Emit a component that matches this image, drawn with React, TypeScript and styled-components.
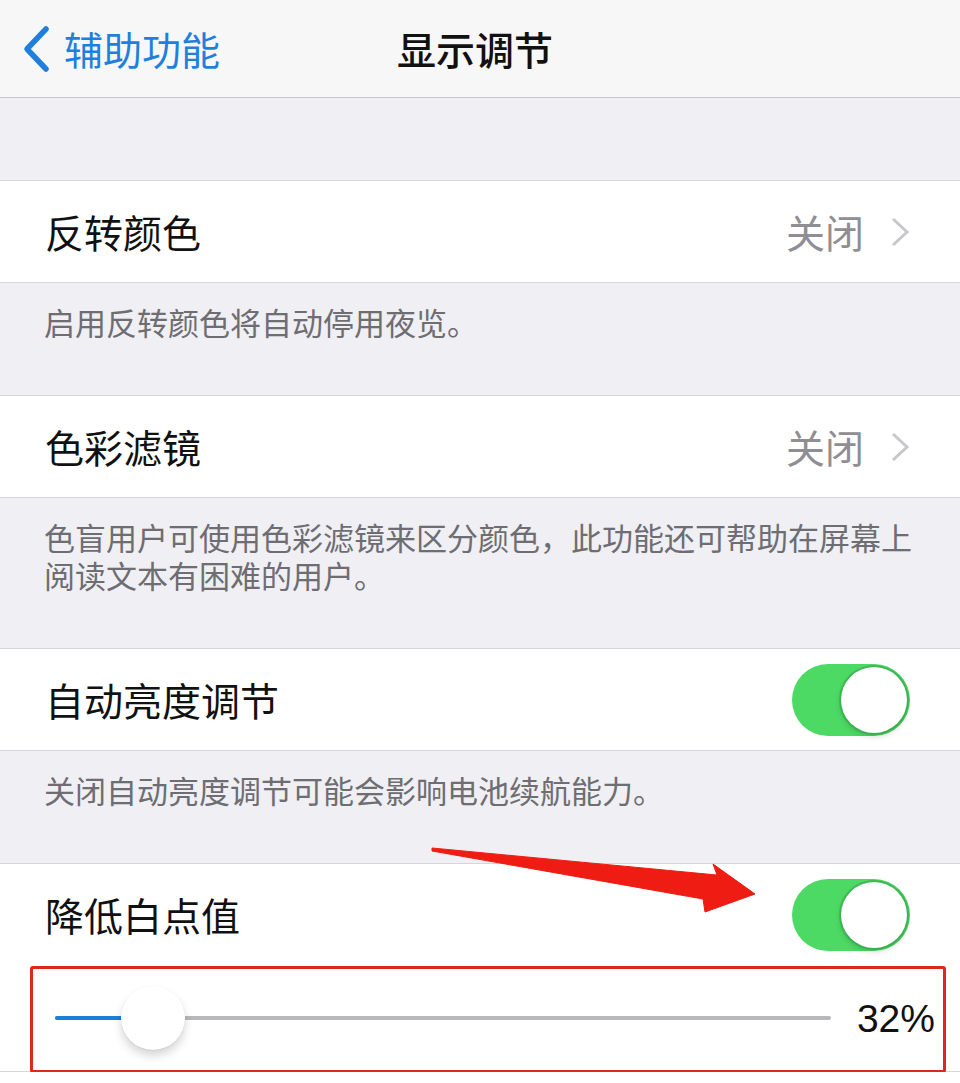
import React from 'react';
import styled, { createGlobalStyle } from 'styled-components';

const GlobalStyle = createGlobalStyle`
  html, body {
    margin: 0;
    padding: 0;
    background: #ffffff;
  }
  body {
    font-family: 'Noto Sans CJK SC', 'Liberation Sans', sans-serif;
    -webkit-font-smoothing: antialiased;
  }
`;

const SLIDER_MIN = 25;
const SLIDER_MAX = 100;
const THUMB = 64;

const Page = styled.div`
  width: 960px;
  display: flex;
  flex-direction: column;
`;

const NavBar = styled.header`
  height: 97px;
  background: #f7f7f8;
  border-bottom: 1px solid #c9c9cd;
  display: grid;
  grid-template-columns: 1fr auto 1fr;
  align-items: center;
`;

const BackButton = styled.div`
  display: flex;
  align-items: center;
  gap: 14px;
  padding-left: 22px;
  color: #1f7fdc;
  font-size: 39px;
  line-height: 1;
`;

const Title = styled.div`
  font-size: 39px;
  font-weight: 500;
  color: #111;
  line-height: 1;
  margin-right: 10px;
`;

const Spacer = styled.div`
  height: 82px;
  background: #efeff4;
`;

const Group = styled.section`
  background: #ffffff;
  border-top: 1px solid #d6d6da;
  border-bottom: 1px solid #d6d6da;
`;

const Row = styled.div<{ $tall?: boolean }>`
  position: relative;
  height: ${(p) => (p.$tall ? 106 : 101)}px;
  display: flex;
  align-items: center;
  padding: 0 50px 0 45px;
`;

const Label = styled.div`
  flex: 1;
  font-size: 39px;
  color: #111;
  line-height: 1;
`;

const Detail = styled.div`
  display: flex;
  align-items: center;
  gap: 26px;
  font-size: 39px;
  color: #8e8e93;
  line-height: 1;
`;

const Footer = styled.div`
  background: #efeff4;
  padding: 20px 40px 54px 44px;
  font-size: 31px;
  line-height: 38px;
  color: #6d6d72;
`;

const Switch = styled.div<{ $on: boolean }>`
  width: 118px;
  height: 72px;
  border-radius: 36px;
  background: ${(p) => (p.$on ? '#4cd964' : '#e5e5ea')};
  display: flex;
  align-items: center;
  justify-content: ${(p) => (p.$on ? 'flex-end' : 'flex-start')};
  padding: 0 3px;
  box-sizing: border-box;
`;

const Knob = styled.div`
  width: 66px;
  height: 66px;
  border-radius: 50%;
  background: #ffffff;
  box-shadow: 0 0 0 2px rgba(52, 160, 72, 0.55), 0 3px 6px rgba(0, 0, 0, 0.18);
`;

const SliderRow = styled.div`
  position: relative;
  height: 106px;
  display: flex;
  align-items: center;
  gap: 26px;
  padding: 0 25px 0 55px;
`;

const Track = styled.div`
  position: relative;
  flex: 1;
  height: 4px;
  border-radius: 2px;
  background: #b8b8bc;
`;

const Fill = styled.div`
  position: absolute;
  left: 0;
  top: 0;
  bottom: 0;
  border-radius: 2px;
  background: #1c7fd8;
`;

const Thumb = styled.div`
  position: absolute;
  top: 50%;
  width: ${THUMB}px;
  height: ${THUMB}px;
  margin-top: -${THUMB / 2}px;
  border-radius: 50%;
  background: #ffffff;
  box-shadow: 0 0.5px 1px rgba(0, 0, 0, 0.12), 0 6px 10px rgba(0, 0, 0, 0.16);
`;

const Percent = styled.div`
  font-family: 'Liberation Sans', Arial, sans-serif;
  font-size: 39px;
  color: #111;
  line-height: 1;
`;

// red annotation frame drawn around the slider
const Frame = styled.div`
  position: absolute;
  top: 1px;
  left: 30px;
  right: 14px;
  bottom: -2px;
  border: 3px solid #e0271d;
  border-radius: 3px;
  pointer-events: none;
`;

const Arrow = styled.svg`
  position: absolute;
  left: 428px;
  top: -18px;
  pointer-events: none;
`;

const BackChevron = () => (
  <svg width="28" height="48" viewBox="0 0 28 48">
    <polyline
      points="24,4 5,24 24,44"
      fill="none"
      stroke="#1f7fdc"
      strokeWidth="5.5"
      strokeLinecap="round"
      strokeLinejoin="round"
    />
  </svg>
);

const Disclosure = () => (
  <svg width="20" height="30" viewBox="0 0 20 30">
    <polyline
      points="3,2 17,15 3,28"
      fill="none"
      stroke="#c7c7cc"
      strokeWidth="3"
      strokeLinejoin="miter"
    />
  </svg>
);

const Toggle = ({ on }: { on: boolean }) => (
  <Switch $on={on}>
    <Knob />
  </Switch>
);

const Slider = ({ value }: { value: number }) => {
  const ratio = (value - SLIDER_MIN) / (SLIDER_MAX - SLIDER_MIN);
  const trackWidth = 960 - 55 - 25 - 26 - 79;
  const left = ratio * (trackWidth - THUMB);
  return (
    <Track>
      <Fill style={{ width: left + THUMB / 2 }} />
      <Thumb style={{ left }} />
    </Track>
  );
};

export default function App() {
  const whitePoint = 32;
  return (
    <Page>
      <GlobalStyle />
      <NavBar>
        <BackButton>
          <BackChevron />
          <span>辅助功能</span>
        </BackButton>
        <Title>显示调节</Title>
        <div />
      </NavBar>

      <Spacer />

      <Group>
        <Row>
          <Label>反转颜色</Label>
          <Detail>
            关闭
            <Disclosure />
          </Detail>
        </Row>
      </Group>
      <Footer>启用反转颜色将自动停用夜览。</Footer>

      <Group>
        <Row>
          <Label>色彩滤镜</Label>
          <Detail>
            关闭
            <Disclosure />
          </Detail>
        </Row>
      </Group>
      <Footer>色盲用户可使用色彩滤镜来区分颜色，此功能还可帮助在屏幕上阅读文本有困难的用户。</Footer>

      <Group>
        <Row>
          <Label>自动亮度调节</Label>
          <Toggle on />
        </Row>
      </Group>
      <Footer>关闭自动亮度调节可能会影响电池续航能力。</Footer>

      <Group>
        <Row>
          <Label>降低白点值</Label>
          <Toggle on />
          <Arrow width="332" height="70" viewBox="0 0 332 70">
            <polygon
              points="4,2 289,29 285,18 327,48 277,66 275,53 4,5"
              fill="#ee1c12"
              stroke="#ee1c12"
              strokeWidth="1"
              strokeLinejoin="round"
            />
          </Arrow>
        </Row>
        <SliderRow>
          <Slider value={whitePoint} />
          <Percent>{whitePoint}%</Percent>
          <Frame />
        </SliderRow>
      </Group>
    </Page>
  );
}
